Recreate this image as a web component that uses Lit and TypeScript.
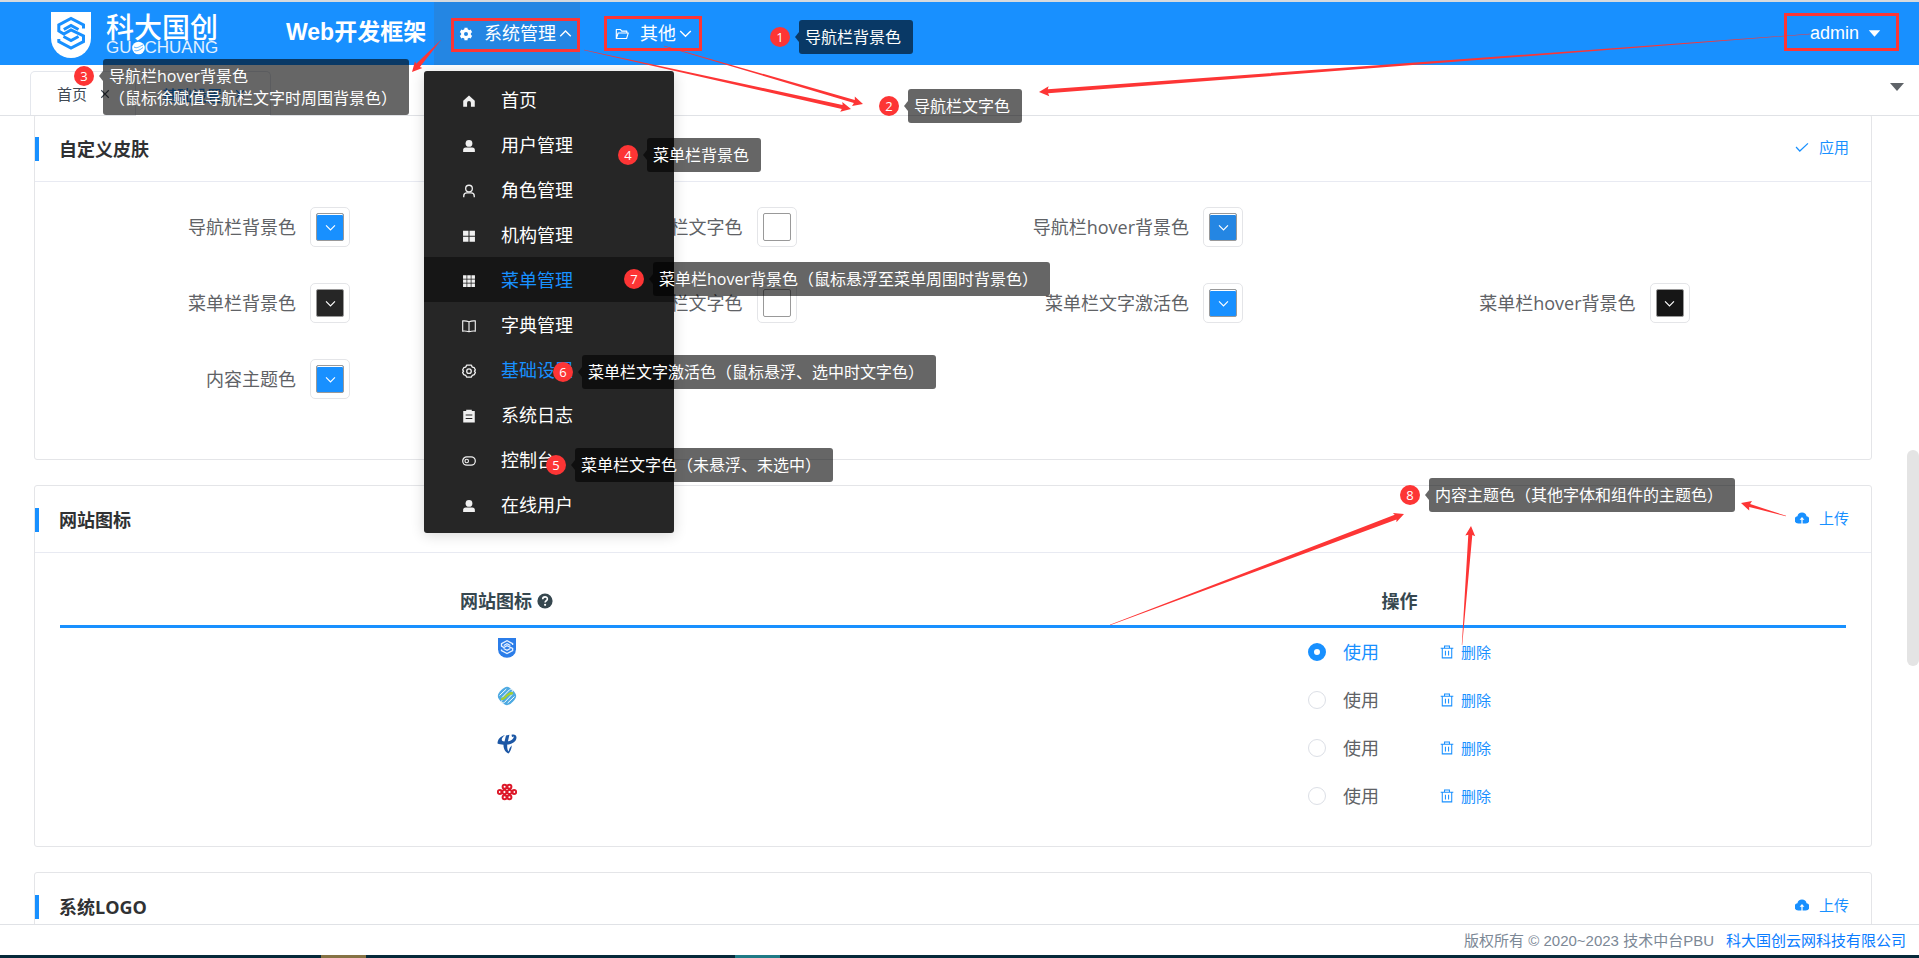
import { LitElement, html, svg, css } from "lit";
import { customElement, property, state } from "lit/decorators.js";
import { classMap } from "lit/directives/class-map.js";
import { styleMap } from "lit/directives/style-map.js";

const glyphs: Record<string, unknown> = {
  gear: svg`<circle cx="8" cy="8" r="4" fill="none" stroke="currentColor" stroke-width="3.4"/>
    <path d="M8 .8v3M8 12.2v3M1.8 4.4l2.6 1.5M11.6 10.1l2.6 1.5M14.2 4.4l-2.6 1.5M4.4 10.1l-2.6 1.5" stroke="currentColor" stroke-width="3.6"/>`,
  folder: svg`<path d="M1.5 13V2.8h4.6l1.6 1.9h5.8v2M1.5 13.2 3.6 6.8h11.6l-2 6.4z" fill="none" stroke="currentColor" stroke-width="1.3" stroke-linejoin="round"/>`,
  up: svg`<path d="M1.5 11.5 8 5l6.5 6.5" fill="none" stroke="currentColor" stroke-width="1.7"/>`,
  down: svg`<path d="M1.5 5 8 11.5 14.5 5" fill="none" stroke="currentColor" stroke-width="1.7"/>`,
  home: svg`<path d="M8 1.6 14.6 7.6V14.6H10.2V10.2a2.200 2.200 0 0 0-4.400 0V14.600H1.400V7.600z" fill="currentColor"/>`,
  user: svg`<circle cx="8" cy="5" r="3.900" fill="currentColor"/><path d="M1.300 14.800v-2.300a2.900 2.900 0 0 1 2.900-2.900h7.600a2.900 2.900 0 0 1 2.900 2.900v2.300z" fill="currentColor"/>`,
  role: svg`<circle cx="8" cy="5.200" r="3.800" fill="none" stroke="currentColor" stroke-width="1.500"/><path d="M2 15v-1.400c0-2 1.600-3.400 3.600-3.400h4.800c2 0 3.600 1.400 3.600 3.400V15" fill="none" stroke="currentColor" stroke-width="1.500"/>`,
  quad: svg`<path d="M1.200 2h6.200v5.600H1.200zM8.600 2h6.200v5.600H8.600zM1.200 8.900h6.200v5.600H1.200zM8.600 8.900h6.200v5.600H8.600z" fill="currentColor"/>`,
  grid: svg`<path d="M1.200 1.500h4v3.900h-4zM6 1.500h4v3.900H6zM10.800 1.500h4v3.900h-4zM1.200 6.200h4v3.900h-4zM6 6.200h4v3.900H6zM10.800 6.200h4v3.900h-4zM1.200 10.900h4v3.900h-4zM6 10.900h4v3.900H6zM10.800 10.900h4v3.900h-4z" fill="currentColor"/>`,
  book: svg`<path d="M.8 2.200c2.400-.3 5 .1 7.200.9 2.200-.8 4.800-1.200 7.200-.9v11.600c-2.400-.3-5 .1-7.200.8-2.200-.7-4.800-1.100-7.200-.8zM8 3.100v11.500" fill="none" stroke="currentColor" stroke-width="1.300"/>`,
  nut: svg`<path d="M5.400 1.300h5.200l1.200 2.200 2.200.7 1.300 2.600-1.100 1.400 1.100 1.400-1.300 2.600-2.200.7-1.200 2.200H5.400l-1.200-2.200-2.200-.7L.7 9.600l1.100-1.400L.7 6.800 2 4.200l2.200-.7z" fill="none" stroke="currentColor" stroke-width="1.500" stroke-linejoin="round"/><circle cx="8" cy="8.200" r="2.600" fill="none" stroke="currentColor" stroke-width="1.500"/>`,
  log: svg`<path fill-rule="evenodd" d="M1.400 2.300h3.400V.9h6.400v1.400h3.400v13H1.400zM4.200 6.200v1.100h7.600V6.200zM4.200 10.200v1.100h7.600v-1.100z" fill="currentColor"/>`,
  toggle: svg`<rect x=".8" y="3.200" width="14.400" height="9.600" rx="4.800" fill="none" stroke="currentColor" stroke-width="1.400"/><circle cx="5.400" cy="8" r="2" fill="none" stroke="currentColor" stroke-width="1.300"/>`,
  check: svg`<path d="m1.200 8 4.300 4.600 9.300-8.800" fill="none" stroke="currentColor" stroke-width="1.400"/>`,
  cloud: svg`<path fill-rule="evenodd" d="M3.800 14.300A4.200 4.200 0 0 1 2.800 6 5.300 5.300 0 0 1 13.200 6 4.200 4.200 0 0 1 12.200 14.300H8.700V10h2L8 6.800 5.300 10h2v4.300z" fill="currentColor"/>`,
  trash: svg`<path d="M.8 3.700h14.400M5.200 3.500V1.200h5.600v2.300M2.600 3.700v11h10.800v-11M6.200 6.600v5.300M9.800 6.600v5.300" fill="none" stroke="currentColor" stroke-width="1.200"/>`,
  close: svg`<path d="m3 3 10 10M13 3 3 13" fill="none" stroke="currentColor" stroke-width="1.500"/>`,
  caret: svg`<path d="M1 4h14L8 12z" fill="currentColor"/>`,
  help: svg`<circle cx="8" cy="8" r="7.600" fill="currentColor"/><path d="M5.700 6.300C5.700 3 10.400 3.200 10.400 6 10.400 7.800 8.100 7.700 8.100 9.500" fill="none" stroke="#fff" stroke-width="1.600"/><circle cx="8.100" cy="11.800" r="1.100" fill="#fff"/>`,
};

const shield = (bg: string, fg: string) => svg`
  <path d="M0 0H40V26A20 20 0 0 1 0 26Z" fill="${bg}"/>
  <path d="M32.500 16.500V13L20 6.500 7.800 13v6l5 3 7.200-4 12.500 6v5.500L20 36 7.800 29.500V27M12.800 17.500 20 13.500l7.500 4M27.500 24.500 20 28.500l-7.500-4" fill="none" stroke="${fg}" stroke-width="3"/>`;

const brandMarks: Record<string, unknown> = {
  guochuang: svg`<g transform="translate(1 0) scale(.45 .43)">${shield("#2b7de9", "#e6f1ff")}</g>`,
  mobile: svg`<path d="M10 .8C13 .8 19.200 6.500 19.200 10S13 19.200 10 19.200.8 13.500.8 10 7 .8 10 .8Z" fill="#4eaae2"/>
    <path d="M2.500 9.500 9.300 3M5 11.500l7.500-7.700c2-1.700 4 .4 2.300 2.200M17.500 10.500 10.700 17M5.200 14.200c-1.700 1.600.5 3.800 2.300 2.200L15 8.500" fill="none" stroke="#fff" stroke-width="1"/>
    <path d="M4.200 12.600c2.600 1.400 3.400-1.200 5.600-3s3.700-3.400 6-1.900" fill="none" stroke="#a7cf2b" stroke-width="2.400"/>`,
  telecom: svg`<path d="M.5 9.500C.5 5 4 1.800 8 1.200 4 4 3.500 7 7.500 7.600L9 1.500 12.400.8 10.900 7.400C14 6.800 16.500 5 17 2.500L15 3 14.500.8C17 0 19.500.8 19.500 3.500 19.500 7.500 15 10.300 10.300 10.600 10 14 10.400 16 11.500 17.500L12.700 14 14.800 11.200C14.600 15 13 18 11.500 19.500 8.500 18.500 6.300 15 6.500 10.800 4 10.600 2 10.300.5 9.500Z" fill="#1c57a5"/>`,
  unicom: svg`<g fill="none" stroke="#dd1829" stroke-width="2"><circle cx="7.600" cy="4.800" r="2"/><circle cx="12.400" cy="4.800" r="2"/><circle cx="7.600" cy="15.200" r="2"/><circle cx="12.400" cy="15.200" r="2"/><circle cx="2.800" cy="10" r="2"/><circle cx="17.200" cy="10" r="2"/><path d="M4.500 10 7.500 7.200 10 9.800l2.500-2.600 3 2.800-3 2.800-2.500-2.600-2.500 2.600z"/></g>`,
};

@customElement("ui-icon")
class UiIcon extends LitElement {
  @property() name = "";
  @property({ type: Number }) size = 14;
  static styles = css`
    :host { display: inline-flex; flex: none; }
    svg { display: block; }
  `;
  render() {
    return html`<svg width=${this.size} height=${this.size} viewBox="0 0 16 16" aria-hidden="true">${glyphs[this.name]}</svg>`;
  }
}

@customElement("ui-card")
class UiCard extends LitElement {
  @property() heading = "";
  @property() action = "";
  @property() icon = "";
  static styles = css`
    :host { display: block; border: 1px solid #e4e5e8; border-radius: 3px; background: #fff; }
    header { display: flex; align-items: center; height: 66px; padding-right: 22px; border-bottom: 1px solid #e8eaf2; }
    .bar { width: 4px; height: 24px; margin-top: 2px; background: #1890ff; }
    h2 { flex: 1; margin: 0; padding: 2px 0 0 20px; font-size: 18px; line-height: 24px; font-weight: 700; color: #303133; }
    button { display: flex; align-items: center; gap: 10px; border: 0; background: none; padding: 0 0 2px; margin: 0; font: inherit; font-size: 15px; line-height: 22px; color: #1890ff; cursor: pointer; }
  `;
  render() {
    return html`
      <header>
        <span class="bar"></span>
        <h2>${this.heading}</h2>
        <button type="button"><ui-icon name=${this.icon} .size=${14}></ui-icon>${this.action}</button>
      </header>
      <slot></slot>
    `;
  }
}

type Callout = { n: number; x: number; y: number; lines: string[] };
type Arrow = { from: [number, number]; to: [number, number]; w: number };

@customElement("note-layer")
class NoteLayer extends LitElement {
  callouts: Callout[] = [
    { n: 1, x: 770, y: 20, lines: ["导航栏背景色"] },
    { n: 2, x: 879, y: 89, lines: ["导航栏文字色"] },
    { n: 3, x: 74, y: 59, lines: ["导航栏hover背景色", "（鼠标徐赋值导航栏文字时周围背景色）"] },
    { n: 4, x: 618, y: 138, lines: ["菜单栏背景色"] },
    { n: 5, x: 546, y: 448, lines: ["菜单栏文字色（未悬浮、未选中）"] },
    { n: 6, x: 553, y: 355, lines: ["菜单栏文字激活色（鼠标悬浮、选中时文字色）"] },
    { n: 7, x: 624, y: 262, lines: ["菜单栏hover背景色（鼠标悬浮至菜单周围时背景色）"] },
    { n: 8, x: 1400, y: 478, lines: ["内容主题色（其他字体和组件的主题色）"] },
  ];
  arrows: Arrow[] = [
    { from: [441, 40], to: [412, 72], w: 5 },
    { from: [584, 50], to: [851, 109], w: 4 },
    { from: [664, 46], to: [863, 104], w: 3 },
    { from: [1810, 34], to: [1039, 92], w: 4 },
    { from: [1110, 625], to: [1404, 514], w: 5 },
    { from: [1462, 645], to: [1471, 526], w: 4 },
    { from: [1786, 516], to: [1741, 503], w: 3 },
  ];
  frames = [
    [451, 18, 129, 34],
    [604, 16, 98, 35],
    [1784, 13, 115, 38],
  ];
  static styles = css`
    :host { position: absolute; inset: 0; z-index: 5; overflow: hidden; pointer-events: none; }
    svg { position: absolute; inset: 0; width: 100%; height: 100%; }
    .note { position: absolute; display: flex; gap: 9px; align-items: flex-start; }
    .badge { width: 20px; height: 20px; margin-top: 7px; border-radius: 50%; background: #fd3535; color: #fff; font-size: 13px; line-height: 20px; text-align: center; }
    .tip { position: relative; padding: 6px 12px 6px 6px; border-radius: 3px; background: rgba(0, 0, 0, 0.6); color: #fff; font-size: 16px; line-height: 22px; white-space: nowrap; }
    .tip::before { content: ""; position: absolute; left: -4px; top: 12px; border: 5px solid transparent; border-left: 0; border-right: 4px solid rgba(0, 0, 0, 0.6); }
  `;
  outline({ from, to, w }: Arrow) {
    const dx = to[0] - from[0];
    const dy = to[1] - from[1];
    const len = Math.hypot(dx, dy);
    const [ux, uy] = [dx / len, dy / len];
    const at = (back: number, side: number) =>
      `${(to[0] - ux * back - uy * side).toFixed(1)},${(to[1] - uy * back + ux * side).toFixed(1)}`;
    return [at(len, 0.2), at(9, w / 2), at(10, 5), at(0, 0), at(10, -5), at(9, -w / 2), at(len, -0.2)].join(" ");
  }
  render() {
    return html`
      <svg aria-hidden="true">
        ${this.frames.map(([x, y, w, h]) => svg`<rect x=${x + 1.5} y=${y + 1.5} width=${w - 3} height=${h - 3} fill="none" stroke="#fd3535" stroke-width="3"/>`)}
        ${this.arrows.map((a) => svg`<polygon points=${this.outline(a)} fill="#fd3535"/>`)}
      </svg>
      ${this.callouts.map(
        (c) => html`<div class="note" style=${styleMap({ left: `${c.x}px`, top: `${c.y}px` })}>
          <span class="badge">${c.n}</span>
          <span class="tip">${c.lines.map((l) => html`<div>${l}</div>`)}</span>
        </div>`
      )}
    `;
  }
}

@customElement("app-root")
class AppRoot extends LitElement {
  @state() selected = "guochuang";

  menu = [
    ["home", "首页"], ["user", "用户管理"], ["role", "角色管理"], ["quad", "机构管理"], ["grid", "菜单管理"],
    ["book", "字典管理"], ["nut", "基础设置"], ["log", "系统日志"], ["toggle", "控制台"], ["user", "在线用户"],
  ];
  fields: [string, string][][] = [
    [["导航栏背景色", "#1890ff"], ["导航栏文字色", "#ffffff"], ["导航栏hover背景色", "#2486e3"]],
    [["菜单栏背景色", "#262626"], ["菜单栏文字色", "#ffffff"], ["菜单栏文字激活色", "#1890ff"], ["菜单栏hover背景色", "#161616"]],
    [["内容主题色", "#1890ff"]],
  ];

  static styles = css`
    :host { position: relative; display: grid; grid-template-rows: auto auto minmax(0, 1fr) auto auto; grid-template-columns: minmax(0, 1fr); height: 100vh; overflow: hidden; background: #fff; color: #606266; font-family: "Open Sans", "Noto Sans CJK SC", sans-serif; font-size: 18px; }
    * { box-sizing: border-box; }
    button { font: inherit; color: inherit; border: 0; background: none; padding: 0; margin: 0; cursor: pointer; }
    a { text-decoration: none; color: inherit; }

    .top { display: flex; align-items: stretch; height: 65px; border-top: 2px solid #d6dade; background: #1890ff; color: #fff; }
    .logo { display: flex; align-items: center; gap: 15px; width: 235px; margin-left: 51px; padding-top: 2px; }
    .names { display: grid; padding-bottom: 2px; }
    .cn { font-size: 28px; line-height: 28px; font-weight: 500; }
    .en { display: flex; align-items: center; font-family: "Liberation Sans", Arial, sans-serif; font-size: 17px; line-height: 14px; color: #e3f1ff; }
    h1 { margin: 0; width: 148px; font: 700 23px/60px "Liberation Sans", "Noto Sans CJK SC", sans-serif; white-space: nowrap; }
    nav { display: flex; gap: 10px; flex: 1; }
    .item { position: relative; }
    .item > button { display: flex; align-items: center; height: 100%; padding: 2px 8px 2px 25px; }
    .item > button span { margin: 0 3px 2px 11px; line-height: 26px; white-space: nowrap; }
    .item.open > button { background: #2486e3; }
    .account { display: flex; align-items: center; gap: 9px; margin-right: 38px; font-family: "Liberation Sans", Arial, sans-serif; }

    .drop { position: absolute; z-index: 3; left: -10px; top: 69px; width: 250px; margin: 0; padding: 6px 0; list-style: none; border-radius: 3px; background: #262626; box-shadow: 0 2px 14px rgba(0, 0, 0, 0.16); }
    .drop a { display: flex; align-items: center; height: 45px; padding: 2px 0 0 38px; gap: 25px; color: #fff; }
    .drop a span { margin-bottom: 2px; line-height: 24px; }
    .drop ui-icon { color: #f0f0f0; }
    .drop .hover { background: #161616; }
    .drop .blue span { color: #1890ff; }

    .tabs { display: flex; align-items: flex-end; height: 51px; padding-left: 30px; border-bottom: 1px solid #e0e2e6; font-size: 15px; }
    .tab { display: flex; align-items: center; gap: 12px; height: 44px; padding: 0 24px 0 26px; border: 1px solid #e4e7ed; border-bottom: 0; border-radius: 5px 0 0 0; color: #404a55; }
    .tab.on { height: 45px; margin: 0 0 -1px; border-radius: 0 5px 0 0; border-left-width: 0; background: #fff; color: #1890ff; font-weight: 500; }
    .more { margin: 0 14px 18px auto; color: #5f6368; line-height: 16px; }

    main { position: relative; overflow: hidden; }
    .cards { display: grid; gap: 25px; margin: -2px 47px 0 34px; }
    .thumb { position: absolute; right: 0; top: 334px; width: 12px; height: 216px; border-radius: 6px; background: #e4e4e4; }

    .skin { display: grid; gap: 36px 0; padding: 25px 24px 60px 26px; }
    .row { display: grid; grid-template-columns: repeat(4, minmax(0, 1fr)); }
    .field { display: flex; align-items: center; gap: 14px; }
    .field label { width: 235px; text-align: right; white-space: nowrap; line-height: 24px; }
    .pick { width: 40px; height: 40px; padding: 5px; border: 1px solid #e4e5e8; border-radius: 5px; background: #fff; }
    .swatch { display: grid; place-items: center; width: 28px; height: 28px; border: 1px solid #999; border-radius: 2px; color: #fff; }
    .swatch.lit { box-shadow: inset 0 1px #fff; }

    table { width: calc(100% - 50px); margin: 26px 25px; border-collapse: separate; border-spacing: 0; table-layout: fixed; }
    th { height: 49px; padding: 0 0 2px; border-bottom: 3px solid #1890ff; color: #36474f; font-weight: 700; line-height: 24px; }
    td { height: 48px; padding: 0; }
    .cell { display: flex; align-items: center; justify-content: center; }
    th .cell { gap: 5px; }
    .mark { padding-bottom: 8px; }
    .mark svg { display: block; }
    .use { display: flex; align-items: center; gap: 17px; margin-right: 61px; line-height: 24px; }
    .use.on { color: #1890ff; }
    .use input { appearance: none; width: 18px; height: 18px; margin: 0; border: 1px solid #dcdfe6; border-radius: 50%; background: #fff; }
    .use input:checked { border: 6px solid #1890ff; }
    .del { display: flex; align-items: center; gap: 7px; font-size: 15px; line-height: 22px; color: #1890ff; }

    footer { display: flex; justify-content: flex-end; gap: 12px; height: 31px; padding-right: 13px; border-top: 1px solid #e0e2e6; background: #fff; font: 15px/32px "Liberation Sans", "Noto Sans CJK SC", sans-serif; color: #7c8896; }
    footer a { color: #0a7cff; }
    .strip { display: flex; height: 3px; background: #06293a; }
    .strip i { width: 45px; }
    .gold { margin-left: 321px; background: #857244; }
    .teal { margin-left: 369px; background: #1f7a86; }
  `;

  swatch(label: string, color: string, id: string) {
    const blue = color !== "#ffffff" && color !== "#262626" && color !== "#161616";
    return html`<div class="field">
      <label for=${id}>${label}</label>
      <button class="pick" id=${id} type="button">
        <span class=${classMap({ swatch: true, lit: blue })} style=${styleMap({ backgroundColor: color })}>
          ${color === "#ffffff" ? "" : html`<ui-icon name="down" .size=${11}></ui-icon>`}
        </span>
      </button>
    </div>`;
  }

  render() {
    return html`
      <header class="top">
        <div class="logo">
          <svg width="40" height="46" viewBox="0 0 40 46" aria-hidden="true">${shield("#fff", "#1890ff")}</svg>
          <div class="names">
            <span class="cn">科大国创</span>
            <span class="en">GU<svg width="13" height="14" viewBox="0 0 13 14" aria-hidden="true"><circle cx="6.500" cy="7" r="6.300" fill="#fff"/><path d="M2 6c3 2 6-1 9-2M2.500 9.500c3 1 6-1 8.500-3" fill="none" stroke="#1890ff" stroke-width=".7"/></svg>CHUANG</span>
          </div>
        </div>
        <h1>Web开发框架</h1>
        <nav>
          <div class="item open">
            <button type="button"><ui-icon name="gear"></ui-icon><span>系统管理</span><ui-icon name="up" .size=${13}></ui-icon></button>
            <ul class="drop">
              ${this.menu.map(
                ([icon, text]) => html`<li><a href="#" class=${classMap({ hover: icon === "grid", blue: icon === "grid" || icon === "nut" })}><ui-icon name=${icon}></ui-icon><span>${text}</span></a></li>`
              )}
            </ul>
          </div>
          <div class="item">
            <button type="button"><ui-icon name="folder"></ui-icon><span>其他</span><ui-icon name="down" .size=${13}></ui-icon></button>
          </div>
        </nav>
        <button class="account" type="button">admin<ui-icon name="caret" .size=${13}></ui-icon></button>
      </header>

      <div class="tabs">
        <a class="tab" href="#">首页<ui-icon name="close" .size=${12}></ui-icon></a>
        <a class="tab on" href="#">基础设置<ui-icon name="close" .size=${12}></ui-icon></a>
        <button class="more" type="button" aria-label="更多"><ui-icon name="caret" .size=${16}></ui-icon></button>
      </div>

      <main>
        <div class="cards">
          <ui-card heading="自定义皮肤" action="应用" icon="check">
            <div class="skin">
              ${this.fields.map((row, r) => html`<div class="row">${row.map(([l, c], i) => this.swatch(l, c, `c${r}${i}`))}</div>`)}
            </div>
          </ui-card>
          <ui-card heading="网站图标" action="上传" icon="cloud">
            <table>
              <thead>
                <tr>
                  <th><div class="cell">网站图标<ui-icon name="help" .size=${16}></ui-icon></div></th>
                  <th>操作</th>
                </tr>
              </thead>
              <tbody>
                ${Object.keys(brandMarks).map(
                  (key) => html`<tr>
                    <td><div class="cell mark"><svg width="20" height="20" viewBox="0 0 20 20" aria-hidden="true">${brandMarks[key]}</svg></div></td>
                    <td>
                      <div class="cell">
                        <label class=${classMap({ use: true, on: this.selected === key })}>
                          <input type="radio" name="favicon" .checked=${this.selected === key} @change=${() => (this.selected = key)} />使用
                        </label>
                        <button class="del" type="button"><ui-icon name="trash" .size=${14}></ui-icon>删除</button>
                      </div>
                    </td>
                  </tr>`
                )}
              </tbody>
            </table>
          </ui-card>
          <ui-card heading="系统LOGO" action="上传" icon="cloud"></ui-card>
        </div>
        <div class="thumb"></div>
      </main>

      <footer><span>版权所有 © 2020~2023 技术中台PBU</span><a href="#">科大国创云网科技有限公司</a></footer>
      <div class="strip"><i class="gold"></i><i class="teal"></i></div>
      <note-layer></note-layer>
    `;
  }
}
